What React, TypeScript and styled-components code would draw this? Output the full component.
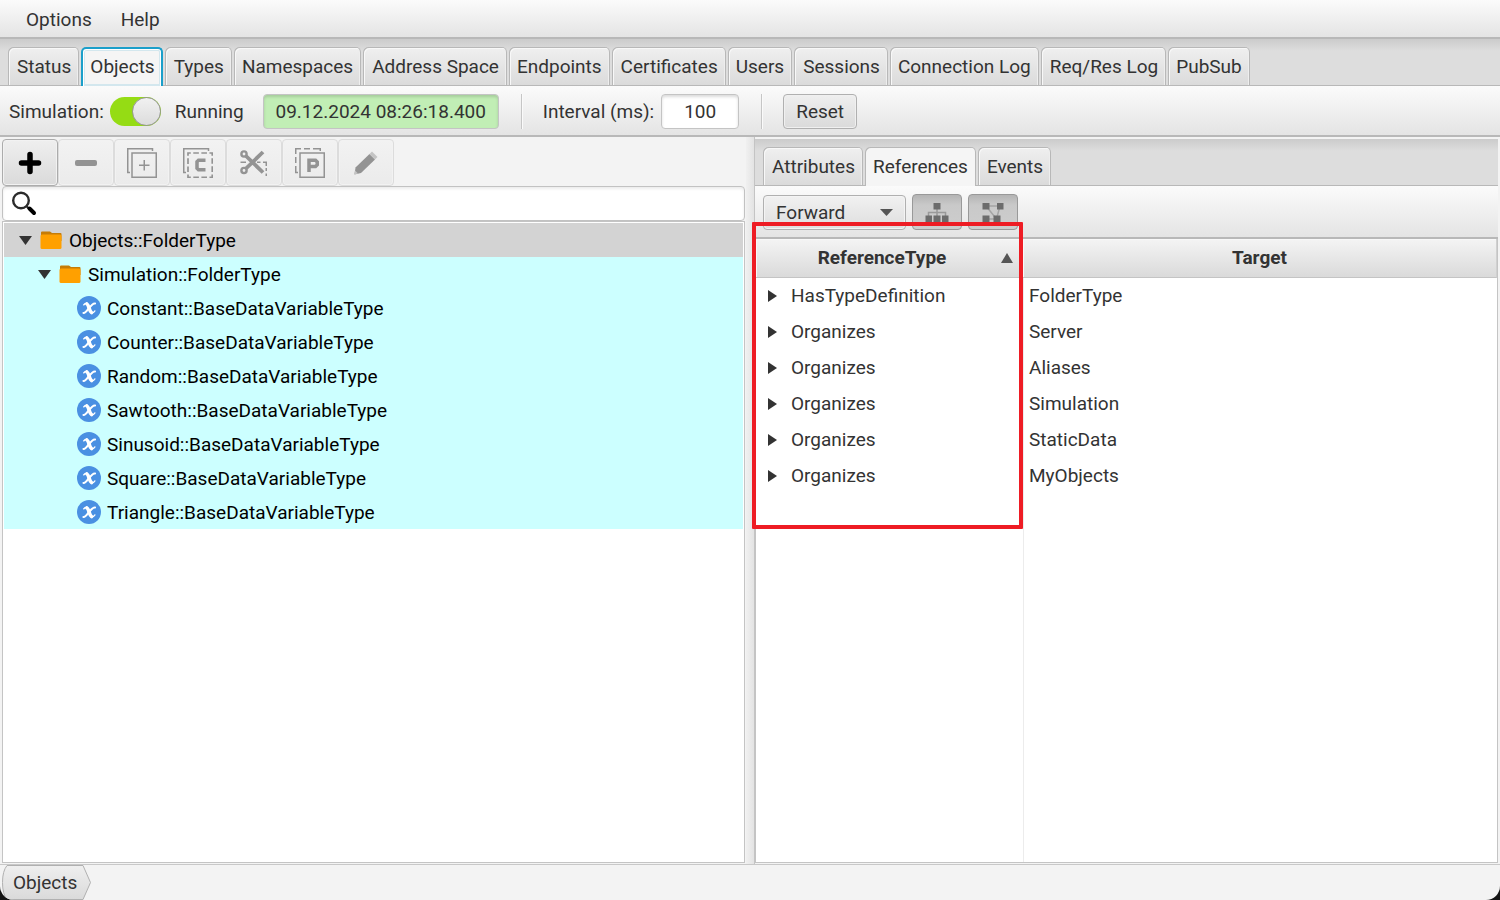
import React from "react";
import styled, { createGlobalStyle, css } from "styled-components";

const GlobalStyle = createGlobalStyle`
  *, *::before, *::after { box-sizing: border-box; }
  body { margin: 0; background: #141414; }
  body, button, input, select, table {
    font-family: Roboto, "Liberation Sans", sans-serif;
    font-size: 19px;
    line-height: 24px;
    color: #333;
  }
`;

const edge = "#b8b8b8";
const barFill = "linear-gradient(#fbfbfb, #e4e4e4)";
const controlFill = "linear-gradient(#efefef, #dadada)";

const Window = styled.div`
  display: flex;
  flex-direction: column;
  min-height: 100vh;
  background: #f3f3f3;
  border-radius: 0 0 14px 14px;
  overflow: hidden;
`;

const MenuBar = styled.nav`
  display: flex;
  gap: 13px;
  height: 39px;
  padding: 0 18px;
  background: ${barFill};
  border-bottom: 2px solid ${edge};
`;

const MenuItem = styled.button`
  border: 0;
  padding: 2px 8px 0;
  background: none;
`;

const TabBar = styled.div`
  display: flex;
  align-items: flex-end;
  gap: 2px;
  padding: 8px 8px 0;
  background: linear-gradient(#cbcbcb, #dddddd 12px);
  box-shadow: inset 0 -1px ${edge};
`;

const TabButton = styled.button<{ $active?: boolean; $focused?: boolean }>`
  height: 39px;
  padding: 0 8px;
  border: 0;
  border-radius: 5px 5px 0 0;
  background: linear-gradient(#f0f0f0, #dadada);
  box-shadow: inset 1px 1px ${edge}, inset -1px 0 ${edge}, inset 0 -1px ${edge},
    inset 2px 2px #f8f8f8, inset -2px 0 #eee;
  white-space: nowrap;
  &:nth-child(odd) {
    padding-left: 9px;
  }
  ${(p) =>
    p.$active &&
    css`
      background: #f5f5f5;
      box-shadow: inset 1px 1px ${edge}, inset -1px 0 ${edge};
    `}
  ${(p) =>
    p.$focused &&
    css`
      border: 2px solid #1b9fca;
      border-bottom: 0;
      padding: 0 6px 2px 7px;
      box-shadow: inset 1px 1px #fff, inset -1px 0 #fff, inset 0 0 0 2px #d3e7ee;
    `}
`;

const SimulationBar = styled.div`
  display: flex;
  align-items: center;
  height: 51px;
  padding: 2px 9px 0;
  background: ${barFill};
  border-bottom: 2px solid ${edge};
`;

const SwitchLabel = styled.label`
  display: flex;
  align-items: center;
  gap: 6px;
  margin-right: 14px;
`;

const Switch = styled.input`
  appearance: none;
  width: 51px;
  height: 29px;
  margin: 0;
  border-radius: 15px;
  background: #95dc14;
  &::before {
    content: "";
    display: block;
    width: 29px;
    height: 29px;
    margin-left: 22px;
    border: 1px solid #969696;
    border-radius: 50%;
    background: linear-gradient(#f1f1f1, #dcdcdc);
  }
`;

const Field = styled.input<{ $width: number; $green?: boolean }>`
  width: ${(p) => p.$width}px;
  height: 35px;
  padding: 0;
  border: 1px solid #c4c4c4;
  border-radius: 4px;
  background: ${(p) => (p.$green ? "#c1eeb5" : "#fff")};
  box-shadow: inset 0 2px 3px rgba(0, 0, 0, 0.14);
  text-align: center;
`;

const Running = styled.span`
  margin-right: 19px;
`;

const IntervalLabel = styled.label`
  display: flex;
  align-items: center;
  gap: 7px;
`;

const Separator = styled.span`
  width: 2px;
  height: 35px;
  margin: 0 20px 0 22px;
  border-left: 1px solid #c6c6c6;
  border-right: 1px solid #fafafa;
`;

const PushButton = styled.button`
  height: 35px;
  padding: 0 12px;
  border: 1px solid #b0b0b0;
  border-radius: 4px;
  background: ${controlFill};
  box-shadow: inset 0 0 0 1px #f0f0f0;
`;

const Split = styled.main`
  flex: 1;
  display: grid;
  grid-template-columns: minmax(0, 1fr) 8px minmax(0, 1fr);
`;

const Divider = styled.div`
  background: linear-gradient(to right, #f0f0f0, #e3e3e3);
`;

const LeftPane = styled.section`
  display: flex;
  flex-direction: column;
  padding: 2px 1px 1px 2px;
`;

const IconBar = styled.div`
  display: flex;
`;

const IconButton = styled.button`
  display: flex;
  align-items: center;
  justify-content: center;
  width: 56px;
  height: 47px;
  padding: 0;
  border: 1px solid #acacac;
  border-radius: 4px;
  background: ${controlFill};
  box-shadow: inset 0 0 0 1px #f2f2f2;
  &:disabled {
    border-color: #dcdcdc;
    background: linear-gradient(#f2f2f2, #ebebeb);
  }
`;

const SearchBox = styled.label`
  display: flex;
  align-items: center;
  height: 35px;
  padding: 0 8px;
  border: 1px solid #c2c2c2;
  border-radius: 4px;
  background: #fff;
  box-shadow: inset 0 2px 3px rgba(0, 0, 0, 0.08);
`;

const SearchInput = styled.input`
  flex: 1;
  min-width: 0;
  border: 0;
  outline: 0;
  background: none;
`;

const Tree = styled.ul`
  flex: 1;
  margin: 0;
  padding: 1px;
  list-style: none;
  border: 1px solid #c4c4c4;
  background: #fff;
  color: #000;
`;

const TreeRow = styled.li<{ $indent: number; $selected?: boolean }>`
  display: flex;
  align-items: center;
  height: 34px;
  padding-left: ${(p) => p.$indent}px;
  background: ${(p) => (p.$selected ? "#d3d3d3" : "#ccffff")};
`;

const Expander = styled.svg`
  flex: none;
  margin-right: 8px;
`;

const NodeIcon = styled.svg<{ $gap: number }>`
  flex: none;
  margin-right: ${(p) => p.$gap}px;
`;

const NodeText = styled.span`
  padding-top: 1px;
`;

const RightPane = styled.section`
  display: flex;
  flex-direction: column;
  padding: 2px 2px 1px 0;
  border-left: 1px solid #c4c4c4;
`;

const FilterBar = styled.div`
  display: flex;
  align-items: flex-start;
  gap: 6px;
  height: 53px;
  padding: 8px 8px 0;
  background: ${barFill};
  border-bottom: 2px solid ${edge};
`;

const SelectBox = styled.div`
  position: relative;
  width: 143px;
  padding-top: 1px;
`;

const Direction = styled.select`
  appearance: none;
  display: block;
  width: 100%;
  height: 35px;
  padding: 0 12px;
  border: 1px solid #b0b0b0;
  border-radius: 4px;
  background: linear-gradient(#f1f1f1, #dedede);
  box-shadow: inset 0 0 0 1px #f4f4f4;
`;

const SelectArrow = styled.svg`
  position: absolute;
  right: 13px;
  top: 15px;
  pointer-events: none;
`;

const ToggleButton = styled.button`
  display: flex;
  align-items: center;
  justify-content: center;
  width: 50px;
  height: 36px;
  padding: 2px 0 0;
  border: 1px solid #999;
  border-radius: 4px;
  background: linear-gradient(#b4b4b4, #c9c9c9 10px, #cdcdcd);
`;

const TableArea = styled.div`
  position: relative;
  flex: 1;
  border: solid #c4c4c4;
  border-width: 0 1px 1px 1px;
  background: linear-gradient(#ececec, #ececec) 267px 0 / 1px 100% no-repeat #fff;
`;

const Highlight = styled.div`
  position: absolute;
  left: -4px;
  top: -17px;
  width: 271px;
  height: 307px;
  border: 4px solid #ee1c24;
  border-radius: 1px;
  pointer-events: none;
`;

const RefTable = styled.table`
  width: 100%;
  border-collapse: separate;
  border-spacing: 0;
  table-layout: fixed;
`;

const HeadCell = styled.th<{ $width?: number }>`
  width: ${(p) => (p.$width ? `${p.$width}px` : "auto")};
  height: 39px;
  padding: 0;
  background: linear-gradient(#f4f4f4, #dadada);
  border-bottom: 1px solid #c4c4c4;
  border-right: 1px solid #d0d0d0;
  box-shadow: inset 1px 1px #f8f8f8;
  font-weight: 700;
`;

const HeadContent = styled.div`
  display: flex;
  align-items: center;
  padding: 0 9px 0 7px;
`;

const HeadText = styled.span`
  flex: 1;
`;

const Cell = styled.td`
  height: 36px;
  padding: 0 6px;
`;

const ExpandCell = styled.div`
  display: flex;
  align-items: center;
  gap: 14px;
  padding-left: 6px;
`;

const Footer = styled.footer`
  height: 36px;
  padding: 0 1px;
  border-top: 1px solid #c8c8c8;
`;

const Crumb = styled.button`
  position: relative;
  display: block;
  width: 90px;
  height: 35px;
  padding: 0 15px 0 12px;
  border: 0;
  background: none;
  text-align: left;
`;

const CrumbShape = styled.svg`
  position: absolute;
  left: 0;
  top: 0;
`;

const CrumbText = styled.span`
  position: relative;
`;

const gray = "#939393";

const glyphs: Record<string, React.ReactNode> = {
  Add: <path d="M15 6.500V23.500M6.500 15H23.500" stroke="#000" strokeWidth="5.500" strokeLinecap="round" />,
  Remove: <rect x="4" y="12" width="22" height="6" rx="2" fill={gray} />,
  "Add instance": (
    <g stroke={gray} strokeWidth="1.500">
      <path d="M3 24.500H.75V.75H25.500V3" />
      <rect x="5" y="5" width="24.250" height="24.250" />
      <path d="M17.250 12V22.500M12 17.250H22.500" />
    </g>
  ),
  Copy: (
    <g stroke={gray}>
      <path d="M3 24.500H.75V.75H25.500V3" strokeWidth="1.500" />
      <rect x="5" y="5" width="24.250" height="24.250" strokeWidth="1.700" strokeDasharray="5.600 2.480" strokeDashoffset="2.800" />
      <path d="M22.500 12.250H15.500L14 13.750V20.250L15.500 21.750H22.500" strokeWidth="3.500" />
    </g>
  ),
  Cut: (
    <g stroke={gray}>
      <circle cx="5" cy="6" r="2.600" strokeWidth="2.400" />
      <circle cx="5" cy="22.500" r="2.600" strokeWidth="2.400" />
      <path d="M7 8L24 24.500M7 20.500L24 4" strokeWidth="3.800" />
      <path d="M1.500 14.250H7M18 14.250H21.500M24 14.250H27.250V18M27.250 20V23M27.250 25.500V28" strokeWidth="1.500" />
    </g>
  ),
  Paste: (
    <g stroke={gray}>
      <path d="M.75 6V.75H6M9 .75H15M18 .75H25.250V3M.75 9V15M.75 18V24.500H3" strokeWidth="1.500" />
      <rect x="5" y="5" width="24.250" height="24.250" strokeWidth="1.500" />
      <path d="M14 24V12.250H20.500L22.250 14V16.750L20.500 18.500H14" strokeWidth="3.500" />
    </g>
  ),
  Edit: (
    <g>
      <path d="M4.500 19.500L18.500 6L24 11.500L10 25L3.500 26.500Z" fill={gray} />
      <path d="M18.500 6L21 3.500L26.500 9L24 11.500Z" fill="#c4c4c4" />
      <path d="M4 22.500L7 25.500L3 26.500Z" fill="#c4c4c4" />
    </g>
  ),
};

const mainTabs = [
  "Status", "Objects", "Types", "Namespaces", "Address Space", "Endpoints",
  "Certificates", "Users", "Sessions", "Connection Log", "Req/Res Log", "PubSub",
];

const variables = ["Constant", "Counter", "Random", "Sawtooth", "Sinusoid", "Square", "Triangle"];

const references = [
  ["HasTypeDefinition", "FolderType"],
  ["Organizes", "Server"],
  ["Organizes", "Aliases"],
  ["Organizes", "Simulation"],
  ["Organizes", "StaticData"],
  ["Organizes", "MyObjects"],
];

function Tabs({ names, active, focused }: { names: string[]; active: string; focused?: boolean }) {
  return (
    <TabBar role="tablist">
      {names.map((name) => (
        <TabButton
          key={name}
          role="tab"
          aria-selected={name === active}
          $active={name === active}
          $focused={focused && name === active}
        >
          {name}
        </TabButton>
      ))}
    </TabBar>
  );
}

function FolderRow({ name, indent, selected }: { name: string; indent: number; selected?: boolean }) {
  return (
    <TreeRow $indent={indent} $selected={selected} role="treeitem" aria-expanded="true" aria-selected={!!selected}>
      <Expander width="13" height="9" viewBox="0 0 13 9" aria-hidden="true">
        <path d="M0 0H13L6.500 9Z" fill="#333" />
      </Expander>
      <NodeIcon $gap={7} width="22" height="18" viewBox="0 0 22 18" aria-hidden="true">
        <path d="M1 17V1.500Q1 .5 2 .5H10L12 2H20.500Q21.500 2 21.500 3V10H1Z" fill="#c67c06" />
        <rect x="0.500" y="3.500" width="21" height="14.500" rx="1.500" fill="#ffa000" />
      </NodeIcon>
      <NodeText>{name}</NodeText>
    </TreeRow>
  );
}

function VariableRow({ name }: { name: string }) {
  return (
    <TreeRow $indent={73} role="treeitem" aria-selected="false">
      <NodeIcon $gap={6} width="24" height="24" viewBox="0 0 24 24" fill="none" aria-hidden="true">
        <circle cx="12" cy="12" r="12" fill="#4a90e2" />
        <g stroke="#fff" strokeLinecap="round">
          <path d="M10 8C12 9 12 15 14.500 16.500" strokeWidth="3.600" />
          <path d="M6.500 17C10 17.500 13.500 7 18 7.500" strokeWidth="2.200" />
          <path d="M6.800 8.800Q8 7 10 7.200M14.500 17Q16.800 17 17.800 15" strokeWidth="1.500" />
        </g>
      </NodeIcon>
      <NodeText>{name}::BaseDataVariableType</NodeText>
    </TreeRow>
  );
}

export default function App() {
  return (
    <>
      <GlobalStyle />
      <Window>
        <MenuBar>
          <MenuItem>Options</MenuItem>
          <MenuItem>Help</MenuItem>
        </MenuBar>
        <Tabs names={mainTabs} active="Objects" focused />
        <SimulationBar>
          <SwitchLabel>
            Simulation:
            <Switch type="checkbox" role="switch" defaultChecked />
          </SwitchLabel>
          <Running>Running</Running>
          <Field $width={236} $green readOnly aria-label="Simulation time" defaultValue="09.12.2024 08:26:18.400" />
          <Separator />
          <IntervalLabel>
            Interval (ms):
            <Field $width={78} defaultValue="100" />
          </IntervalLabel>
          <Separator />
          <PushButton>Reset</PushButton>
        </SimulationBar>
        <Split>
          <LeftPane>
            <IconBar role="toolbar">
              {Object.keys(glyphs).map((name) => (
                <IconButton key={name} aria-label={name} disabled={name !== "Add"}>
                  <svg width="30" height="30" viewBox="0 0 30 30" fill="none" aria-hidden="true">
                    {glyphs[name]}
                  </svg>
                </IconButton>
              ))}
            </IconBar>
            <SearchBox>
              <svg width="26" height="26" viewBox="0 0 26 26" fill="none" aria-hidden="true">
                <circle cx="10" cy="9.500" r="7.800" stroke="#2b2b2b" strokeWidth="2.400" />
                <path d="M15.500 15L18 18" stroke="#2b2b2b" strokeWidth="2" />
                <path d="M18.500 17.500L23 22" stroke="#000" strokeWidth="4" strokeLinecap="round" />
              </svg>
              <SearchInput type="text" aria-label="Search nodes" />
            </SearchBox>
            <Tree role="tree">
              <FolderRow name="Objects::FolderType" indent={15} selected />
              <FolderRow name="Simulation::FolderType" indent={34} />
              {variables.map((name) => (
                <VariableRow key={name} name={name} />
              ))}
            </Tree>
          </LeftPane>
          <Divider />
          <RightPane>
            <Tabs names={["Attributes", "References", "Events"]} active="References" />
            <FilterBar>
              <SelectBox>
                <Direction aria-label="Reference direction" defaultValue="Forward">
                  <option>Forward</option>
                  <option>Inverse</option>
                  <option>Both</option>
                </Direction>
                <SelectArrow width="13" height="7" viewBox="0 0 13 7" aria-hidden="true">
                  <path d="M0 0H13L6.500 7Z" fill="#555" />
                </SelectArrow>
              </SelectBox>
              <ToggleButton aria-label="Hierarchical references" aria-pressed="true">
                <svg width="24" height="20" viewBox="0 0 24 20" fill="none" aria-hidden="true">
                  <path d="M12 6V13M3.500 13V9.500H20.500V13" stroke="#999" strokeWidth="1.500" />
                  <path d="M8.500 0H15.500V6.500H8.500ZM.5 12.500H7V19H.5ZM8.500 12.500H15.500V19H8.500ZM17 12.500H23.500V19H17Z" fill="#6c6c6c" />
                </svg>
              </ToggleButton>
              <ToggleButton aria-label="Non-hierarchical references" aria-pressed="true">
                <svg width="22" height="20" viewBox="0 0 22 20" fill="none" aria-hidden="true">
                  <path d="M4 3H18L14.500 16H4M4 3L14.500 16" stroke="#a4a4a4" strokeWidth="1.500" />
                  <path d="M.5 0H7.500V6.500H.5ZM15 0H21.500V6.500H15ZM.5 12.500H7.500V19H.5ZM11.500 12.500H18.500V19H11.500Z" fill="#6c6c6c" />
                </svg>
              </ToggleButton>
            </FilterBar>
            <TableArea>
              <RefTable>
                <thead>
                  <tr>
                    <HeadCell $width={267} aria-sort="ascending">
                      <HeadContent>
                        <HeadText>ReferenceType</HeadText>
                        <svg width="12" height="10" viewBox="0 0 12 10" aria-hidden="true">
                          <path d="M0 10H12L6 0Z" fill="#555" />
                        </svg>
                      </HeadContent>
                    </HeadCell>
                    <HeadCell>Target</HeadCell>
                  </tr>
                </thead>
                <tbody>
                  {references.map(([type, target]) => (
                    <tr key={target}>
                      <Cell>
                        <ExpandCell>
                          <svg width="9" height="12" viewBox="0 0 9 12" aria-hidden="true">
                            <path d="M0 0L9 6L0 12Z" fill="#333" />
                          </svg>
                          {type}
                        </ExpandCell>
                      </Cell>
                      <Cell>{target}</Cell>
                    </tr>
                  ))}
                </tbody>
              </RefTable>
              <Highlight />
            </TableArea>
          </RightPane>
        </Split>
        <Footer>
          <Crumb>
            <CrumbShape width="90" height="35" viewBox="0 0 90 35" fill="none" aria-hidden="true">
              <defs>
                <linearGradient id="crumb" x1="0" y1="0" x2="0" y2="1">
                  <stop offset="0" stopColor="#efefef" />
                  <stop offset="1" stopColor="#dadada" />
                </linearGradient>
              </defs>
              <path d="M6 .5H82L89.500 17.500L82 34.500H6Q1.500 29 1.500 17.500Q1.500 6 6 .5Z" fill="url(#crumb)" stroke="#b0b0b0" />
            </CrumbShape>
            <CrumbText>Objects</CrumbText>
          </Crumb>
        </Footer>
      </Window>
    </>
  );
}
